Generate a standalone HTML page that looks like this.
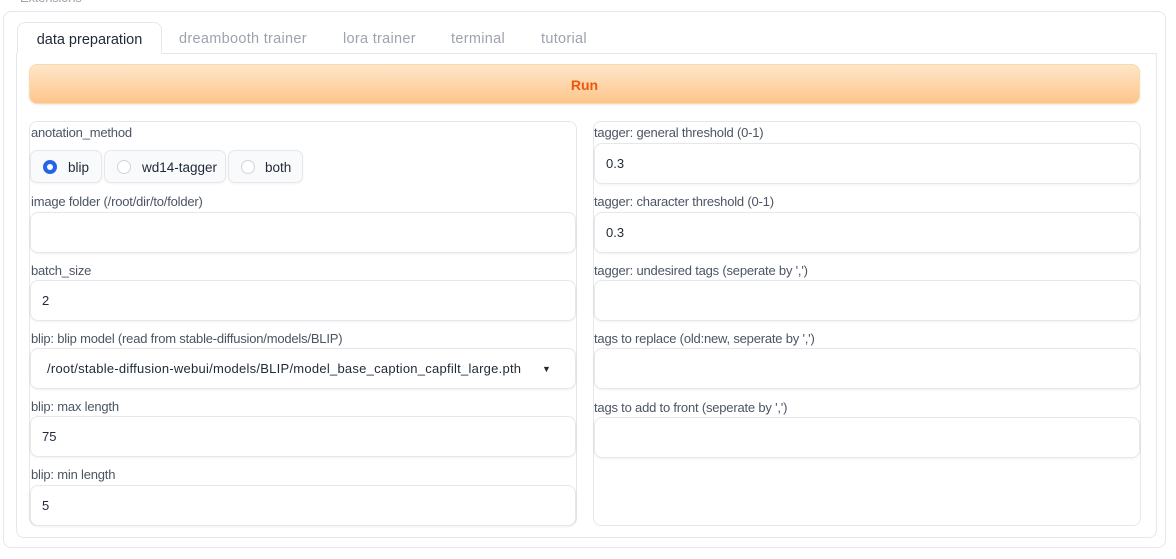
<!DOCTYPE html>
<html><head><meta charset="utf-8"><style>
*{box-sizing:border-box;margin:0;padding:0}
body{width:1176px;height:559px;background:#fff;font-family:"Liberation Sans",sans-serif;position:relative;overflow:hidden;color:#374151}
.a{position:absolute}
.outer{left:3px;top:11px;width:1163px;height:537px;border:1px solid #e5e7eb;border-radius:8px}
.panel{left:16px;top:53px;width:1141px;height:485px;border:1px solid #e5e7eb;border-top:none;border-radius:0 0 8px 8px}
.tabline{left:161px;top:53px;width:996px;height:1px;background:#e5e7eb}
.tab{top:22px;height:32px;font-size:14.5px;color:#9ca3af;line-height:35px;letter-spacing:0.3px}
.tact{left:17px;width:145px;border:1px solid #e5e7eb;border-bottom:1px solid #fff;border-radius:8px 8px 0 0;color:#1f2937;text-align:center;background:#fff;letter-spacing:0}
.run{left:29px;top:64px;width:1111px;height:40px;border-radius:8px;background:linear-gradient(#fee6c8,#fdc58b);border:1px solid #fcd9ad;color:#ea580c;font-weight:bold;font-size:14px;text-align:center;line-height:40px;box-shadow:0 1px 2px rgba(0,0,0,.08)}
.blk{top:121px;width:548px;height:405px;border:1px solid #e5e7eb;border-radius:8px}
.lbl{font-size:13px;color:#4b5563;letter-spacing:-0.2px}
.inp{height:41px;border:1px solid #e5e7eb;border-radius:8px;font-size:13px;color:#1f2937;line-height:40px;padding-left:11px;box-shadow:0 1px 2px rgba(0,0,0,.06)}
.rad{top:150px;height:33px;border:1px solid #e5e7eb;border-radius:7px;background:#f9fafb;font-size:13.5px;color:#1f2937;line-height:33px;box-shadow:0 1px 2px rgba(0,0,0,.05)}
.c{position:absolute;top:9px;width:14px;height:14px;border-radius:50%;border:1px solid #d1d5db;background:#fff}
</style></head><body>
<div class="a lbl" style="left:20px;top:-10px;color:#9ca3af">Extensions</div>
<div class="a outer"></div>
<div class="a panel"></div>
<div class="a tabline"></div>
<div class="a tab tact">data preparation</div>
<div class="a tab" style="left:179px">dreambooth trainer</div>
<div class="a tab" style="left:343px">lora trainer</div>
<div class="a tab" style="left:451px">terminal</div>
<div class="a tab" style="left:541px">tutorial</div>
<div class="a run">Run</div>

<div class="a blk" style="left:29px"></div>
<div class="a blk" style="left:593px"></div>

<div class="a lbl" style="left:31px;top:125px">anotation_method</div>
<div class="a rad" style="left:30px;width:72px"><div class="c" style="left:12px;border:4px solid #2563eb"></div><span style="position:absolute;left:37px">blip</span></div>
<div class="a rad" style="left:104px;width:122px"><div class="c" style="left:12px"></div><span style="position:absolute;left:37px">wd14-tagger</span></div>
<div class="a rad" style="left:228px;width:75px"><div class="c" style="left:12px"></div><span style="position:absolute;left:36px">both</span></div>

<div class="a lbl" style="left:31px;top:194px">image folder (/root/dir/to/folder)</div>
<div class="a inp" style="left:30px;top:212px;width:546px"></div>
<div class="a lbl" style="left:31px;top:263px">batch_size</div>
<div class="a inp" style="left:30px;top:280px;width:546px">2</div>
<div class="a lbl" style="left:31px;top:331px">blip: blip model (read from stable-diffusion/models/BLIP)</div>
<div class="a inp" style="left:30px;top:348px;width:546px;padding-left:16px;letter-spacing:0.25px">/root/stable-diffusion-webui/models/BLIP/model_base_caption_capfilt_large.pth<span style="position:absolute;left:511px;top:0;font-size:9px">▼</span></div>
<div class="a lbl" style="left:31px;top:399px">blip: max length</div>
<div class="a inp" style="left:30px;top:416px;width:546px">75</div>
<div class="a lbl" style="left:31px;top:467px">blip: min length</div>
<div class="a inp" style="left:30px;top:485px;width:546px">5</div>

<div class="a lbl" style="left:594px;top:125px">tagger: general threshold (0-1)</div>
<div class="a inp" style="left:594px;top:143px;width:546px">0.3</div>
<div class="a lbl" style="left:594px;top:194px">tagger: character threshold (0-1)</div>
<div class="a inp" style="left:594px;top:212px;width:546px">0.3</div>
<div class="a lbl" style="left:594px;top:263px">tagger: undesired tags (seperate by ',')</div>
<div class="a inp" style="left:594px;top:280px;width:546px"></div>
<div class="a lbl" style="left:594px;top:331px">tags to replace (old:new, seperate by ',')</div>
<div class="a inp" style="left:594px;top:348px;width:546px"></div>
<div class="a lbl" style="left:594px;top:400px">tags to add to front (seperate by ',')</div>
<div class="a inp" style="left:594px;top:417px;width:546px"></div>
</body></html>
